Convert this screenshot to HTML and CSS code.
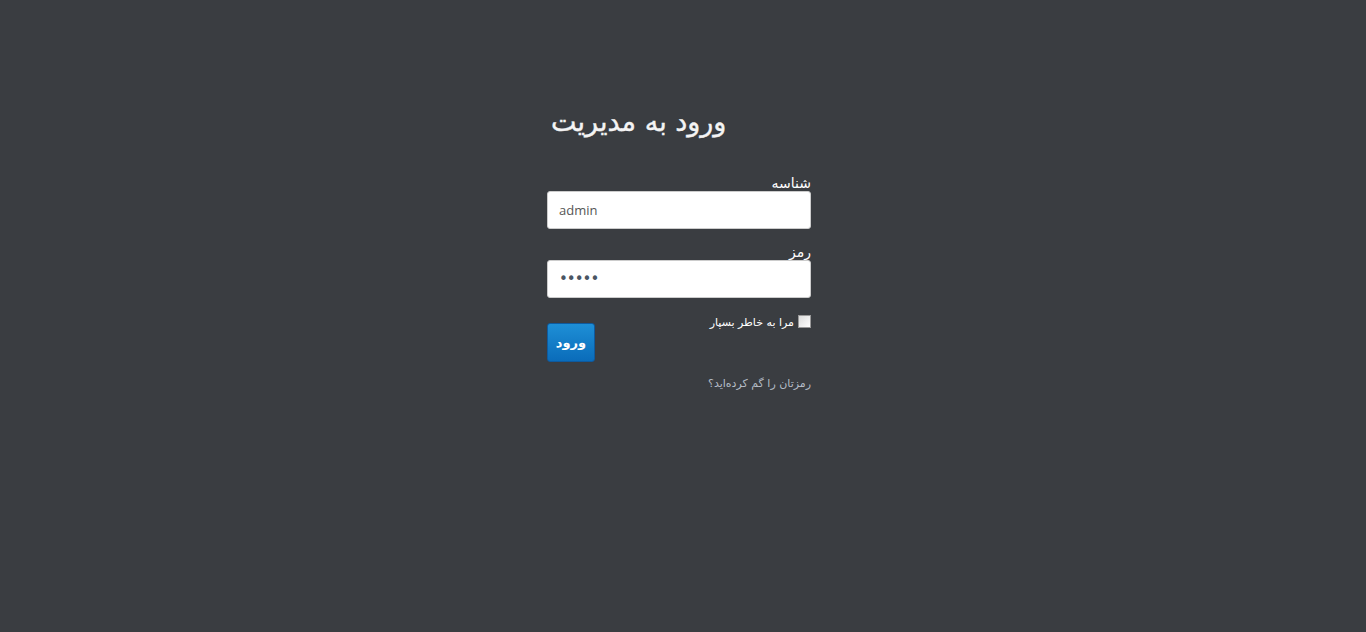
FILE: index.html
```html
<!DOCTYPE html>
<html lang="fa">
<head>
<meta charset="utf-8">
<title>ورود به مدیریت</title>
<link rel="stylesheet" href="styles.css">
</head>
<body>
<div class="login">
  <h1 class="title">ورود به مدیریت</h1>
  <form class="form" dir="rtl">
    <label class="label" for="user">شناسه</label>
    <input class="field" id="user" type="text" value="admin" dir="ltr">
    <label class="label label-pass" for="pass">رمز</label>
    <input class="field field-pass" id="pass" type="password" value="admin" dir="ltr">
    <div class="row">
      <label class="remember"><span class="check"></span>مرا به خاطر بسپار</label>
      <button class="btn" type="button">ورود</button>
    </div>
    <a class="forgot" href="#">رمزتان را گم کرده‌اید؟</a>
  </form>
</div>
</body>
</html>
```
FILE: styles.css
```css
html, body {
  margin: 0;
  padding: 0;
  height: 100%;
}
body {
  background: #3a3d41;
  font-family: "DejaVu Sans", "Noto Sans", sans-serif;
  color: #fff;
}
.login {
  width: 264px;
  margin-left: calc(50% - 136px);
  padding-top: 102px;
}
.title {
  margin: 0 0 0 4px;
  font-size: 27px;
  font-weight: normal;
  line-height: 40px;
  color: #f4f4f4;
  text-align: left;
  direction: rtl;
  width: max-content;
  -webkit-text-stroke: 0.4px #f4f4f4;
}
.form {
  display: flex;
  flex-direction: column;
  margin-top: 34px;
}
.label {
  font-size: 14px;
  line-height: 15px;
  color: #fff;
  text-align: right;
}
.label-pass {
  margin-top: 16px;
}
.field {
  box-sizing: border-box;
  width: 264px;
  height: 38px;
  margin: 0;
  border: 1px solid #ccc;
  border-radius: 3px;
  background: #fff;
  padding: 0 11px;
  font-family: "Open Sans", "DejaVu Sans", sans-serif;
  font-size: 13px;
  color: #555;
  outline: none;
}
.field-pass {
  font-family: "DejaVu Sans", sans-serif;
  font-size: 15px;
  letter-spacing: -1px;
  color: #4a5563;
}
.row {
  display: flex;
  justify-content: space-between;
  align-items: flex-start;
  margin-top: 18px;
}
.remember {
  display: flex;
  align-items: center;
  gap: 4px;
  font-size: 11px;
  line-height: 14px;
  color: #fff;
}
.check {
  box-sizing: border-box;
  width: 13px;
  height: 13px;
  border: 1px solid #999;
  background: linear-gradient(135deg, #dcdcdc, #fff);
  margin-top: -3px;
}
.btn {
  width: 48px;
  height: 39px;
  margin-top: 7px;
  border: 1px solid #0e5a9e;
  border-radius: 3px;
  background: linear-gradient(#1e8fd6, #0a6cba);
  color: #fff;
  font-family: "DejaVu Sans", sans-serif;
  font-weight: bold;
  font-size: 13px;
  padding: 0;
  cursor: pointer;
}
.forgot {
  margin-top: 15px;
  font-size: 11px;
  line-height: 14px;
  color: #b4bcc6;
  text-decoration: none;
  text-align: right;
  align-self: flex-start;
}
```
